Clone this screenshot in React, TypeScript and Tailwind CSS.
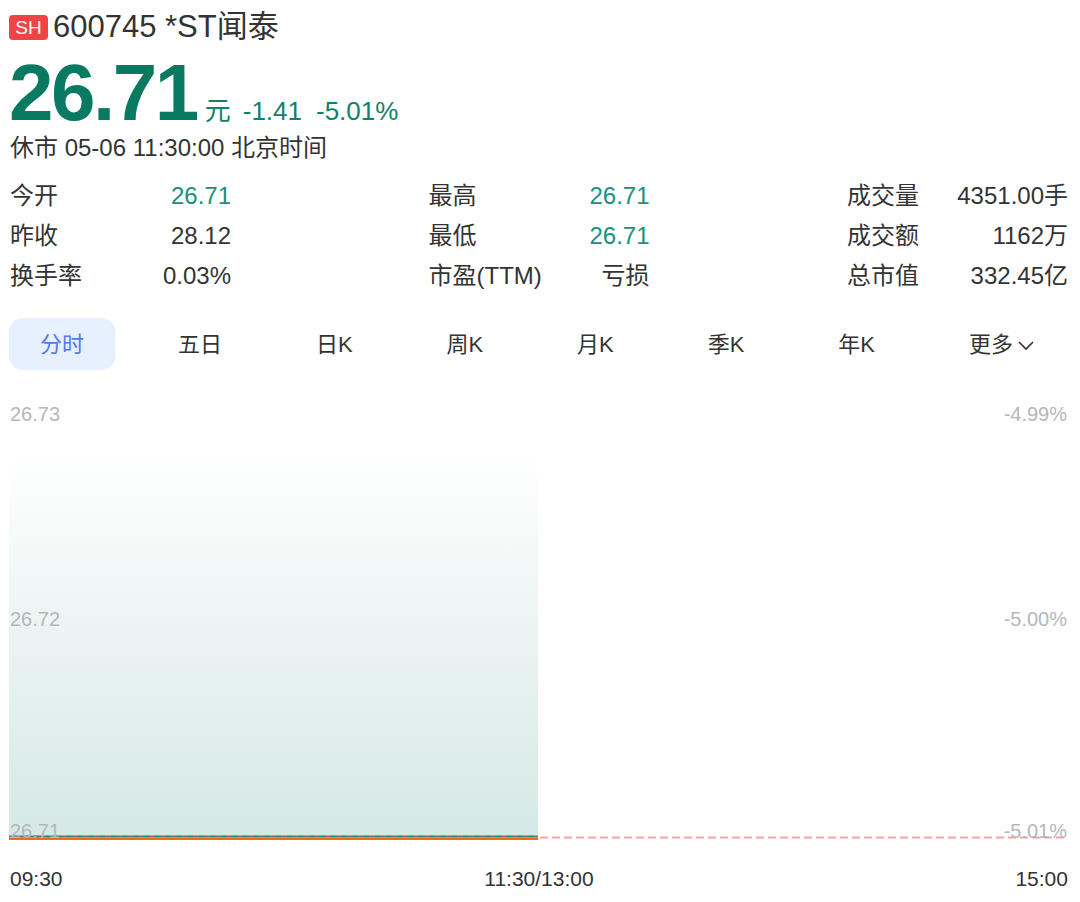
import React from "react";

const stats: { label: string; value: string; green?: boolean }[][] = [
  [
    { label: "今开", value: "26.71", green: true },
    { label: "昨收", value: "28.12" },
    { label: "换手率", value: "0.03%" },
  ],
  [
    { label: "最高", value: "26.71", green: true },
    { label: "最低", value: "26.71", green: true },
    { label: "市盈(TTM)", value: "亏损" },
  ],
  [
    { label: "成交量", value: "4351.00手" },
    { label: "成交额", value: "1162万" },
    { label: "总市值", value: "332.45亿" },
  ],
];

const tabs = ["分时", "五日", "日K", "周K", "月K", "季K", "年K"];

export default function App() {
  return (
    <div className="w-[1080px] h-[902px] bg-white text-[#333] font-['Liberation_Sans','Noto_Sans_CJK_SC',sans-serif] pl-[10px] pr-[12px] overflow-hidden">
      {/* Title */}
      <div className="h-[53px] flex items-center pt-[1px]">
        <span className="ml-[-1px] h-[25px] w-[39px] rounded-[4px] bg-[#ef4444] text-white text-[19px] leading-[25px] flex items-center justify-center">
          SH
        </span>
        <span className="ml-[5px] text-[31px] leading-[34px] text-[#333]">600745 *ST闻泰</span>
      </div>

      {/* Price */}
      <div className="h-[80px] flex items-baseline">
        <span className="text-[80px] leading-[80px] font-bold text-[#097a61] tracking-[-2.5px] ml-[-1px]">26.71</span>
        <span className="ml-[8px] text-[26px] leading-[30px] text-[#10826a]">元</span>
        <span className="ml-[12px] text-[26px] leading-[30px] text-[#10826a]">-1.41</span>
        <span className="ml-[14px] text-[26px] leading-[30px] text-[#10826a]">-5.01%</span>
      </div>

      {/* Status */}
      <div className="h-[30px] text-[24px] leading-[30px] text-[#333]">休市 05-06 11:30:00 北京时间</div>

      {/* Stats */}
      <div className="mt-[13px] flex justify-between">
        {stats.map((col, ci) => (
          <div key={ci} className="w-[221px] flex flex-col">
            {col.map((s) => (
              <div key={s.label} className="h-[40px] flex items-center justify-between text-[24px]">
                <span className="text-[#333]">{s.label}</span>
                <span className={s.green ? "text-[#18917a]" : "text-[#333]"}>{s.value}</span>
              </div>
            ))}
          </div>
        ))}
      </div>

      {/* Tabs */}
      <div className="mt-[22px] h-[52px] flex items-center justify-between ml-[-1px]">
        {tabs.map((t, i) => (
          <div
            key={t}
            className={
              i === 0
                ? "h-[52px] px-[31px] rounded-[14px] bg-[#e6f0ff] text-[#5279ea] text-[22px] flex items-center"
                : "h-[52px] px-[31px] text-[#333] text-[22px] flex items-center"
            }
          >
            {t}
          </div>
        ))}
        <div className="h-[52px] pl-[31px] pr-[32px] text-[#333] text-[22px] flex items-center">
          更多
          <svg width="20" height="12" viewBox="0 0 20 12" className="ml-[3px] mt-[2px]">
            <path d="M3 3 L10 10 L17 3" fill="none" stroke="#333" strokeWidth="1.6" />
          </svg>
        </div>
      </div>

      {/* Chart */}
      <div className="relative h-[466px] mt-[21px] ml-[-10px] mr-[-12px]">
        <svg width="1080" height="466" viewBox="0 0 1080 466" className="absolute left-0 top-0">
          <defs>
            <linearGradient id="area" x1="0" y1="0" x2="0" y2="1">
              <stop offset="0" stopColor="#ffffff" />
              <stop offset="1" stopColor="#d5e8e5" />
            </linearGradient>
          </defs>
          <rect x="9" y="60" width="529" height="386" fill="url(#area)" />
          <line x1="540" y1="446.5" x2="1068" y2="446.5" stroke="#f5a3a3" strokeWidth="2" strokeDasharray="8 4" />
          <rect x="9" y="444.5" width="529" height="2" fill="#76706a" />
          <line x1="12" y1="445.5" x2="538" y2="445.5" stroke="#17997f" strokeWidth="1.5" strokeDasharray="5 6" />
          <rect x="9" y="446.5" width="529" height="2.5" fill="#f26a1e" />
        </svg>
        <span className="absolute left-[10px] top-[13px] text-[20px] leading-[20px] text-[#b4b7bc]">26.73</span>
        <span className="absolute right-[13px] top-[13px] text-[20px] leading-[20px] text-[#b4b7bc]">-4.99%</span>
        <span className="absolute left-[10px] top-[218px] text-[20px] leading-[20px] text-[#b4b7bc]">26.72</span>
        <span className="absolute right-[13px] top-[218px] text-[20px] leading-[20px] text-[#b4b7bc]">-5.00%</span>
        <span className="absolute left-[10px] top-[430px] text-[20px] leading-[20px] text-[#b4b7bc]">26.71</span>
        <span className="absolute right-[13px] top-[430px] text-[20px] leading-[20px] text-[#b4b7bc]">-5.01%</span>
      </div>

      {/* Time axis */}
      <div className="h-[44px] flex items-center justify-between text-[21px] text-[#333]">
        <span>09:30</span>
        <span>11:30/13:00</span>
        <span>15:00</span>
      </div>
    </div>
  );
}
